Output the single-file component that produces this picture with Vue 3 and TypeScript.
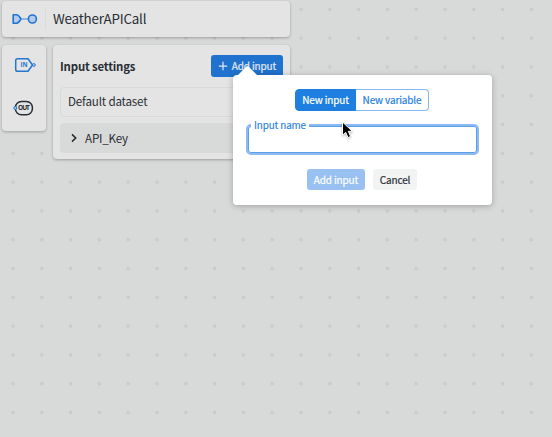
<script setup lang="ts">
import { ref } from 'vue'

type Mode = 'input' | 'variable'

const title = 'WeatherAPICall'
const inputs = ref<string[]>(['API_Key'])
const mode = ref<Mode>('input')
const name = ref('')
const tabs: { id: Mode; label: string }[] = [
  { id: 'input', label: 'New input' },
  { id: 'variable', label: 'New variable' },
]
</script>

<template>
  <main class="canvas">
    <header class="card header">
      <svg class="logo" width="26" height="12" viewBox="0 0 26 12">
        <path d="M9.5 6H17" stroke="#7eabdf" stroke-width="1.6" />
        <path d="M1.2 1.8H4.6Q6.5 1.9 9 6Q6.5 10.1 4.6 10.2H1.2Z" fill="#b5cce8" stroke="#1f74cf" stroke-width="1.6" stroke-linejoin="round" />
        <circle cx="20.4" cy="6" r="4" fill="#b5cce8" stroke="#1f74cf" stroke-width="1.6" />
      </svg>
      <h1 class="title"><span>{{ title }}</span></h1>
    </header>
    <div class="body">
      <nav class="card rail">
        <svg width="24" height="18" viewBox="0 0 24 18">
          <path d="M4.5 2.7H15L19.5 9L15 15.3H4.5Q2.7 15.3 2.7 13.5V4.5Q2.7 2.7 4.5 2.7Z" fill="none" stroke="#2477cf" stroke-width="1.5" stroke-linejoin="round" />
          <circle cx="20.9" cy="9" r="1.4" fill="#c8daf0" stroke="#2477cf" stroke-width="1" />
          <text class="glyph in" x="7.6" y="11.2" textLength="7">IN</text>
        </svg>
        <svg width="24" height="18" viewBox="0 0 24 18">
          <rect x="2.4" y="2.4" width="17" height="13.4" rx="6" fill="none" stroke="#282e33" stroke-width="1.5" />
          <circle cx="2.3" cy="9" r="1.5" fill="#a9c7ea" stroke="#2477cf" stroke-width="1" />
          <text class="glyph out" x="5" y="11.3" textLength="11.8">OUT</text>
        </svg>
      </nav>
      <section class="card panel">
        <div class="panel-head">
          <h2>Input settings</h2>
          <button class="btn primary add">
            <svg width="10" height="10" viewBox="0 0 10 10"><path d="M5 .8V9.2M.8 5H9.2" stroke="#e3e8ef" stroke-width="1.25" /></svg>
            <span>Add input</span>
          </button>
        </div>
        <div class="row dataset"><span>Default dataset</span></div>
        <div v-for="item in inputs" :key="item" class="row item">
          <svg width="6" height="10" viewBox="0 0 6 10"><path d="M1 1.4L4.7 5L1 8.6" fill="none" stroke="#282e33" stroke-width="1.6" /></svg>
          <span>{{ item }}</span>
        </div>
      </section>
    </div>
    <div class="popover">
      <div class="tabs">
        <button v-for="t in tabs" :key="t.id" class="tab" :class="[t.id, { active: mode === t.id }]" @click="mode = t.id">{{ t.label }}</button>
      </div>
      <label class="field">
        <span class="label">Input name</span>
        <input v-model="name" type="text" />
      </label>
      <div class="actions">
        <button class="btn submit">Add input</button>
        <button class="btn cancel">Cancel</button>
      </div>
    </div>
    <svg class="cursor" width="14" height="20" viewBox="0 0 14 20">
      <path d="M1.5 1V14.2L4.7 11.4L7 16.6L9.6 15.4L7.3 10.3H11.4Z" fill="#000" stroke="#fff" stroke-width="1" stroke-linejoin="round" />
    </svg>
  </main>
</template>

<style>
body {
  margin: 0;
}
</style>

<style scoped>
* {
  box-sizing: border-box;
}
.canvas {
  position: relative;
  width: 552px;
  height: 437px;
  padding: 1px 2px;
  overflow: hidden;
  background-color: #d8dad9;
  background-image: radial-gradient(circle, #cacccb 1.6px, transparent 2.2px);
  background-size: 28.8px 28.8px;
  background-position: -1.4px -5px;
  color: #282e33;
  font-family: "Noto Sans CJK SC", "Noto Sans", sans-serif;
  font-size: 12px;
}
.card {
  background: #e4e4e4;
  border-radius: 4px;
  box-shadow: 0 1px 3px rgba(0, 0, 0, 0.28);
}
.header {
  display: flex;
  align-items: center;
  width: 288px;
  height: 36px;
  padding-left: 10px;
}
.title {
  display: flex;
  align-items: center;
  height: 21px;
  margin: 0 0 0 7px;
  padding: 0 0 2px 7px;
  border-left: 1px solid #dadcdc;
  font-size: 13.4px;
  letter-spacing: -0.2px;
  font-weight: 400;
  white-space: nowrap;
}
.body {
  display: flex;
  align-items: flex-start;
  gap: 7px;
  margin-top: 8px;
}
.rail {
  display: flex;
  flex-direction: column;
  align-items: center;
  gap: 25px;
  width: 43.5px;
  height: 86px;
  padding: 11px 0 0 3px;
}
.glyph {
  font-family: "Open Sans", sans-serif;
  font-weight: 700;
}
.in {
  font-size: 6.2px;
  fill: #2477cf;
}
.out {
  font-size: 6.5px;
  fill: #282e33;
}
.panel {
  width: 237.5px;
  height: 114px;
  padding: 10px 7.5px 0;
}
.panel-head {
  display: flex;
  align-items: center;
  justify-content: space-between;
  height: 22px;
}
h2 {
  margin: 0;
  padding-bottom: 1px;
  font-size: 11.4px;
  letter-spacing: -0.17px;
  font-weight: 700;
}
.btn {
  display: flex;
  align-items: center;
  justify-content: center;
  height: 21px;
  padding: 0 0 1px;
  border: 0;
  border-radius: 3px;
  font: 10px "Noto Sans CJK SC", sans-serif;
  letter-spacing: -0.14px;
  -webkit-text-stroke: 0.2px;
  white-space: nowrap;
}
.add {
  gap: 4px;
  width: 72px;
  height: 22px;
  padding-left: 1px;
  background: #1f72cd;
  color: #e3e8ef;
}
.row {
  display: flex;
  align-items: center;
  height: 30px;
  border-radius: 4px;
  font-size: 11.6px;
  letter-spacing: -0.17px;
}
.dataset {
  margin-top: 10px;
  padding: 0 0 2px 7px;
  border: 1px solid #d8dada;
}
.item {
  gap: 8px;
  margin-top: 6px;
  padding-left: 11px;
  background: #d8dad9;
}
.popover {
  position: absolute;
  left: 233px;
  top: 75px;
  display: flex;
  flex-direction: column;
  align-items: center;
  width: 259px;
  height: 129.5px;
  padding-top: 14px;
  border-radius: 4px;
  background: #fff;
  box-shadow: 0 1px 6px rgba(0, 0, 0, 0.26);
}
.popover::before {
  content: "";
  position: absolute;
  left: 4px;
  top: -9px;
  width: 21px;
  height: 10px;
  background: #fff;
  clip-path: polygon(0 100%, 45% 5%, 50% 0, 55% 5%, 100% 100%);
}
.tabs {
  display: flex;
  margin-left: -1px;
}
.tab {
  height: 22px;
  padding: 0 0 1px;
  border: 1px solid #85b6ed;
  background: #fff;
  color: #1f7fe0;
  font: 10px "Noto Sans CJK SC", sans-serif;
  letter-spacing: -0.14px;
  -webkit-text-stroke: 0.2px;
  white-space: nowrap;
}
.tab.input {
  width: 61px;
  border-radius: 4px 0 0 4px;
}
.tab.variable {
  width: 73px;
  border-left: 0;
  border-radius: 0 4px 4px 0;
}
.tab.active {
  border-color: #1f7fe0;
  background: #1f7fe0;
  color: #fff;
}
.field {
  position: relative;
  width: 233px;
  height: 31px;
  margin: 13px 0 0 -1px;
}
.field input {
  display: block;
  width: 100%;
  height: 100%;
  padding: 0 8px;
  border: 2px solid #8cbaf0;
  border-radius: 5px;
  outline: 0;
  background: #fff;
  box-shadow: inset 0 0 0 1px #5c9fe6;
  font: inherit;
}
.label {
  position: absolute;
  left: 5px;
  top: -6px;
  padding: 0 3.5px;
  background: #fff;
  color: #2a80da;
  font-size: 9.9px;
  letter-spacing: -0.12px;
  -webkit-text-stroke: 0.15px;
  line-height: 14px;
  white-space: nowrap;
}
.actions {
  display: flex;
  gap: 8px;
  margin: 14px 0 0 -1px;
}
.submit {
  width: 58px;
  background: #98c0f0;
  color: #fff;
}
.cancel {
  width: 44px;
  background: #f2f3f3;
  color: #282e33;
}
.cursor {
  position: absolute;
  left: 341px;
  top: 121px;
  filter: drop-shadow(0 1px 1px rgba(0, 0, 0, 0.3));
}
</style>
